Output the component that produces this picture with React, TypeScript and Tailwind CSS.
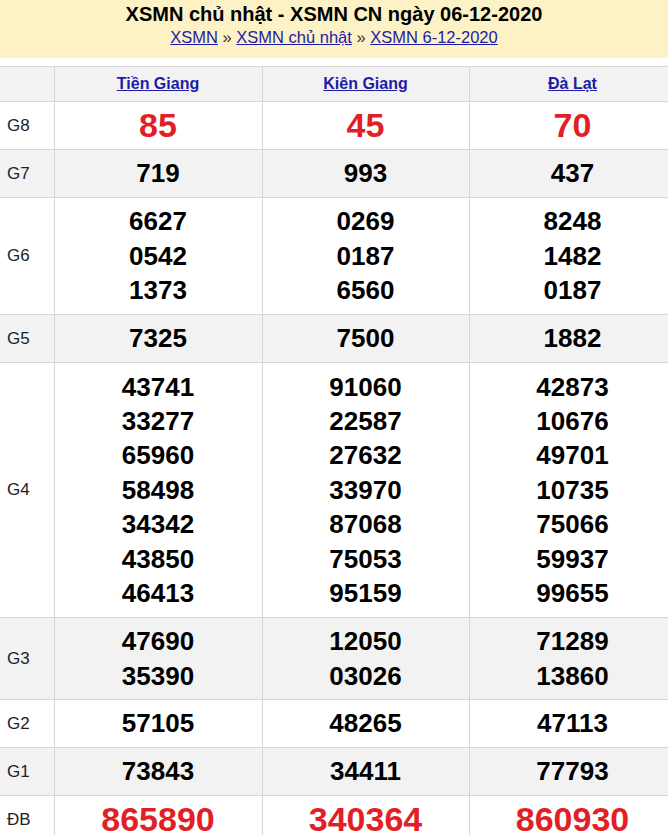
const provinces = ['Tiền Giang', 'Kiên Giang', 'Đà Lạt'];

type Row = { label: string; cols: string[][]; red?: boolean };

const rows: Row[] = [
  { label: 'G8', red: true, cols: [['85'], ['45'], ['70']] },
  { label: 'G7', cols: [['719'], ['993'], ['437']] },
  {
    label: 'G6',
    cols: [
      ['6627', '0542', '1373'],
      ['0269', '0187', '6560'],
      ['8248', '1482', '0187'],
    ],
  },
  { label: 'G5', cols: [['7325'], ['7500'], ['1882']] },
  {
    label: 'G4',
    cols: [
      ['43741', '33277', '65960', '58498', '34342', '43850', '46413'],
      ['91060', '22587', '27632', '33970', '87068', '75053', '95159'],
      ['42873', '10676', '49701', '10735', '75066', '59937', '99655'],
    ],
  },
  {
    label: 'G3',
    cols: [
      ['47690', '35390'],
      ['12050', '03026'],
      ['71289', '13860'],
    ],
  },
  { label: 'G2', cols: [['57105'], ['48265'], ['47113']] },
  { label: 'G1', cols: [['73843'], ['34411'], ['77793']] },
  { label: 'ĐB', red: true, cols: [['865890'], ['340364'], ['860930']] },
];

// row height by number of lines in a cell
const rowH: Record<number, string> = {
  1: 'h-[48px]',
  2: 'h-[82px]',
  3: 'h-[117px]',
  7: 'h-[255px]',
};

export default function App() {
  return (
    <div className="w-[668px] h-[835px] overflow-hidden bg-white text-[#222] font-['Liberation_Sans',Arial,sans-serif]">
      <header className="h-[58px] bg-[#fcf2c6] text-center pt-[2px]">
        <h1 className="text-[20px] font-bold leading-[24px] text-black">
          XSMN chủ nhật - XSMN CN ngày 06-12-2020
        </h1>
        <div className="text-[16.5px] leading-[22px] text-[#333]">
          <a href="#" className="text-[#1c1ca8] underline">XSMN</a>
          {' » '}
          <a href="#" className="text-[#1c1ca8] underline">XSMN chủ nhật</a>
          {' » '}
          <a href="#" className="text-[#1c1ca8] underline">XSMN 6-12-2020</a>
        </div>
      </header>

      <table className="mt-[8px] w-[676px] table-fixed border-collapse">
        <colgroup>
          <col className="w-[54px]" />
          <col className="w-[208px]" />
          <col className="w-[207px]" />
          <col className="w-[207px]" />
        </colgroup>
        <thead>
          <tr className="bg-[#f2f2f2] h-[35px]">
            <th className="border-t border-r border-[#d6d6d6]"></th>
            {provinces.map((p) => (
              <th key={p} className="border border-[#d6d6d6] text-[16px] font-bold leading-[20px]">
                <a href="#" className="text-[#1c1ca8] underline">{p}</a>
              </th>
            ))}
          </tr>
        </thead>
        <tbody>
          {rows.map((r, i) => (
            <tr
              key={r.label}
              className={`${rowH[r.cols[0].length]} ${i % 2 === 1 ? 'bg-[#f2f2f2]' : 'bg-white'}`}
            >
              <td className="border-t border-b border-r border-[#d6d6d6] pl-[7px] text-[17px] text-[#222] align-middle">
                {r.label}
              </td>
              {r.cols.map((c, j) => (
                <td
                  key={j}
                  className={`border border-[#d6d6d6] text-center font-bold p-0 align-middle leading-[34.4px] ${
                    r.red ? 'text-[34px] text-[#e21f26]' : 'text-[26px] text-black'
                  }`}
                >
                  {c.map((n, k) => (
                    <div key={k}>{n}</div>
                  ))}
                </td>
              ))}
            </tr>
          ))}
        </tbody>
      </table>
    </div>
  );
}
